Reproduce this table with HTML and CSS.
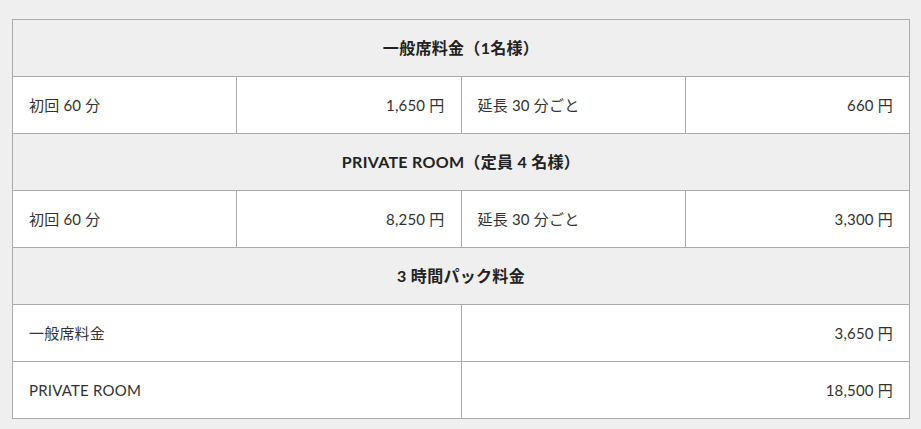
FILE: index.html
```html
<!DOCTYPE html>
<html lang="ja">
<head>
<meta charset="utf-8">
<link rel="stylesheet" href="styles.css">
</head>
<body>
<div class="wrap">
<table class="price">
  <tr><th colspan="4">一般席料金（1名様）</th></tr>
  <tr>
    <td>初回 60 分</td>
    <td class="num">1,650 円</td>
    <td>延長 30 分ごと</td>
    <td class="num">660 円</td>
  </tr>
  <tr><th colspan="4">PRIVATE ROOM（定員 4 名様）</th></tr>
  <tr>
    <td>初回 60 分</td>
    <td class="num">8,250 円</td>
    <td>延長 30 分ごと</td>
    <td class="num">3,300 円</td>
  </tr>
  <tr><th colspan="4">3 時間パック料金</th></tr>
  <tr>
    <td colspan="2">一般席料金</td>
    <td colspan="2" class="num">3,650 円</td>
  </tr>
  <tr>
    <td colspan="2">PRIVATE ROOM</td>
    <td colspan="2" class="num">18,500 円</td>
  </tr>
</table>
</div>
</body>
</html>
```

FILE: styles.css
```css
html, body {
  margin: 0;
  padding: 0;
  background: #efefef;
}
body {
  font-family: Lato, "Noto Sans CJK JP", sans-serif;
  color: #333;
  font-size: 15px;
}
.wrap {
  padding: 19px 0 0 12px;
}
.price {
  border-collapse: collapse;
  width: 898px;
  table-layout: fixed;
}
.price th,
.price td {
  border: 1px solid #ababab;
  height: 57px;
  box-sizing: border-box;
  padding: 0 16px;
  line-height: 24px;
  vertical-align: middle;
}
.price th {
  background: #efefef;
  font-weight: 700;
  font-size: 16px;
  letter-spacing: 0.3px;
  color: #222;
  text-align: center;
}
.price td {
  background: #fff;
  text-align: left;
  letter-spacing: 0.2px;
}
.price td.num {
  text-align: right;
}
```
